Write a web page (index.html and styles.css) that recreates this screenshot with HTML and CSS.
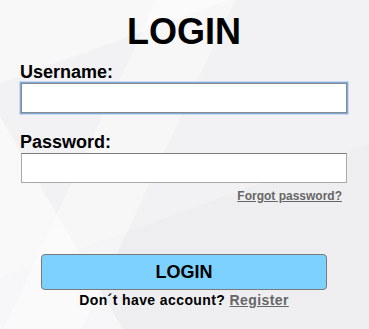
FILE: index.html
```html
<!DOCTYPE html>
<html lang="en">
<head>
<meta charset="utf-8">
<title>Login</title>
<link rel="stylesheet" href="styles.css">
</head>
<body>
<main class="login">
  <h1 class="title">LOGIN</h1>
  <form class="form">
    <label class="label" for="user">Username:</label>
    <input class="field field-focus" id="user" type="text">
    <label class="label label-pass" for="pass">Password:</label>
    <input class="field" id="pass" type="password">
    <div class="forgot-row"><a class="link forgot" href="#">Forgot password?</a></div>
    <button class="btn" type="button">LOGIN</button>
    <p class="register">Don´t have account? <a class="link" href="#">Register</a></p>
  </form>
</main>
</body>
</html>
```
FILE: styles.css
```css
* { box-sizing: border-box; }
html, body { margin: 0; padding: 0; }
body {
  width: 369px;
  height: 329px;
  overflow: hidden;
  font-family: "Liberation Sans", Arial, sans-serif;
  color: #000;
  background:
    linear-gradient(115deg, rgba(255,255,255,0) 0 30%, rgba(255,255,255,0.4) 30% 45%, rgba(255,255,255,0) 45%),
    linear-gradient(60deg, rgba(255,255,255,0.5) 0 22%, rgba(255,255,255,0) 22%),
    linear-gradient(160deg, rgba(255,255,255,0.45) 0 18%, rgba(255,255,255,0) 18% 60%, rgba(236,236,239,0.6) 60%),
    #f2f2f4;
}
.login {
  padding: 0 22px 0 21px;
}
.title {
  margin: 0;
  padding-top: 14px;
  font-size: 36px;
  line-height: 36px;
  font-weight: bold;
  text-align: center;
}
.form {
  display: flex;
  flex-direction: column;
}
.label {
  display: block;
  margin-top: 12px;
  margin-left: -1px;
  font-size: 18px;
  line-height: 21px;
  font-weight: bold;
}
.label-pass { margin-top: 19px; }
.field {
  display: block;
  width: 326px;
  height: 30px;
  margin: 0;
  background: #fff;
  border: 1px solid #a9a9a9;
  border-top-color: #7d7d7d;
}
.field-focus {
  border-color: #8a8a8a;
  box-shadow: 0 0 0 1px #7ea9db, 0 0 0 2px rgba(160,195,235,0.5);
}
.forgot-row {
  display: flex;
  justify-content: flex-end;
  padding-right: 5px;
  margin-top: 6px;
}
.link {
  color: #666;
  font-weight: bold;
  text-decoration: underline;
}
.forgot {
  font-size: 12px;
  line-height: 15px;
}
.btn {
  align-self: center;
  width: 286px;
  height: 36px;
  margin-top: 50px;
  padding: 0;
  background: #7dd1ff;
  border: 1px solid #7a7a7a;
  border-radius: 4px;
  font-family: "Liberation Sans", Arial, sans-serif;
  font-size: 18px;
  font-weight: bold;
  color: #000;
}
.register {
  margin: 2px 0 0;
  text-align: center;
  font-size: 14px;
  line-height: 17px;
  font-weight: bold;
  letter-spacing: 0.4px;
}
```
